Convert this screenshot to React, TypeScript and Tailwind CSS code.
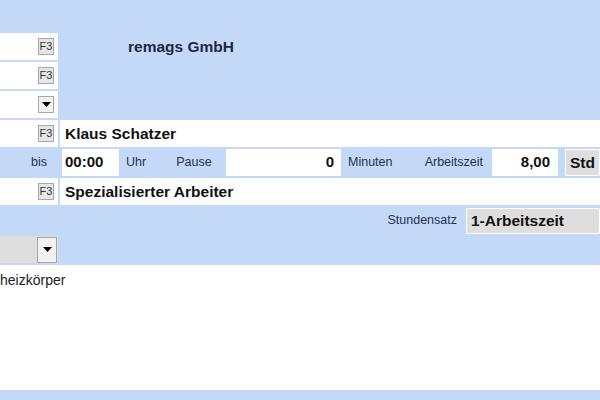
import React from 'react';

const F3 = () => (
  <div className="w-[16px] h-[17px] bg-[#e6e6e6] border border-[#a8a8a8] flex items-center justify-center text-[11px] leading-none text-[#333]">
    F3
  </div>
);

const ArrowBtn = ({ className = '' }: { className?: string }) => (
  <div className={`bg-[#f2f2f2] border border-[#a8a8a8] flex items-center justify-center ${className}`}>
    <svg width="9" height="5" viewBox="0 0 9 5">
      <polygon points="0,0 9,0 4.5,5" fill="#000" />
    </svg>
  </div>
);

export default function App() {
  return (
    <div
      className="w-[600px] h-[400px] overflow-hidden bg-[#c4d9f7] pt-[33px] flex flex-col gap-[2px]"
      style={{ fontFamily: '"Liberation Sans", Arial, sans-serif' }}
    >
      {/* Mandant */}
      <div className="h-[27px] flex gap-[2px]">
        <div className="w-[58px] bg-white flex items-center justify-end pr-[4px]">
          <F3 />
        </div>
        <div className="flex-1 flex items-center pl-[68px] pt-[1px] text-[15.5px] font-bold text-[#1c2846]">
          remags GmbH
        </div>
      </div>

      <div className="h-[27px] flex gap-[2px]">
        <div className="w-[58px] bg-white flex items-center justify-end pr-[4px]">
          <F3 />
        </div>
      </div>

      <div className="h-[27px] flex gap-[2px]">
        <div className="w-[58px] bg-white flex items-center justify-end pr-[4px]">
          <ArrowBtn className="w-[16px] h-[17px]" />
        </div>
      </div>

      {/* Mitarbeiter */}
      <div className="h-[27px] flex gap-[2px]">
        <div className="w-[58px] bg-white flex items-center justify-end pr-[4px]">
          <F3 />
        </div>
        <div className="flex-1 bg-white flex items-center pl-[5px] text-[15.5px] font-bold text-[#111]">
          Klaus Schatzer
        </div>
      </div>

      {/* Zeiten */}
      <div className="h-[27px] flex text-[12.5px] text-[#1f3152]">
        <div className="w-[58px] flex items-center justify-end pr-[11px]">bis</div>
        <div className="w-[57px] ml-[4px] bg-white flex items-center pl-[3px] text-[15px] font-bold text-[#111]">
          00:00
        </div>
        <div className="w-[107px] flex items-center">
          <span className="ml-[7px]">Uhr</span>
          <span className="ml-[30px]">Pause</span>
        </div>
        <div className="w-[115px] bg-white flex items-center justify-end pr-[7px] text-[15px] font-bold text-[#111]">
          0
        </div>
        <div className="w-[151px] flex items-center justify-between pl-[7px] pr-[9px]">
          <span>Minuten</span>
          <span>Arbeitszeit</span>
        </div>
        <div className="w-[66px] bg-white flex items-center justify-end pr-[8px] text-[15px] font-bold text-[#111]">
          8,00
        </div>
        <div className="flex-1 ml-[7px] bg-[#dedede] border border-white flex items-center pl-[4px] text-[15.5px] font-bold text-[#111]">
          Std
        </div>
      </div>

      {/* Funktion */}
      <div className="h-[27px] flex gap-[2px]">
        <div className="w-[58px] bg-white flex items-center justify-end pr-[4px]">
          <F3 />
        </div>
        <div className="flex-1 bg-white flex items-center pl-[5px] text-[15.5px] font-bold text-[#111]">
          Spezialisierter Arbeiter
        </div>
      </div>

      {/* Stundensatz */}
      <div className="h-[27px] flex items-center justify-end">
        <span className="text-[12.5px] text-[#1f3152] mr-[9px]">Stundensatz</span>
        <div className="w-[134px] h-[26px] bg-[#dedede] border border-white flex items-center pl-[4px] text-[15.5px] font-bold text-[#111]">
          1-Arbeitszeit
        </div>
      </div>

      {/* Auswahl */}
      <div className="h-[27px] flex">
        <div className="w-[58px] bg-[#dedede] flex items-center justify-end pr-[1px]">
          <ArrowBtn className="w-[20px] h-[26px]" />
        </div>
      </div>

      {/* Bemerkung */}
      <div className="h-[125px] bg-white overflow-hidden pt-[5px]">
        <div className="text-[14px] text-[#222] whitespace-nowrap">heizkörper</div>
      </div>
    </div>
  );
}
